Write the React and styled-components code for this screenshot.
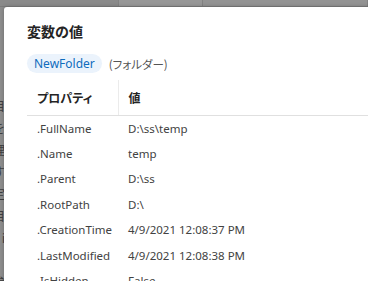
import React from 'react';
import styled, { createGlobalStyle } from 'styled-components';

const GlobalStyle = createGlobalStyle`
  html, body {
    margin: 0;
    padding: 0;
    overflow: hidden;
  }
  body {
    font-family: "Noto Sans", "Noto Sans CJK JP", sans-serif;
  }
`;

// dimmed app behind the dialog
const Page = styled.div`
  position: relative;
  width: 368px;
  height: 281px;
  overflow: hidden;
  background: #8e8e8e;
`;

const TopStrip = styled.div`
  display: flex;
  height: 7px;
  border-bottom: 1px solid #7c7c7c;
  box-sizing: border-box;
`;

const StripSegment = styled.div`
  width: ${(p) => p.$width || 'auto'};
  flex: ${(p) => (p.$width ? 'none' : '1')};
  background: ${(p) => p.$shade};
  border-right: 1px solid #828282;
`;

const SideList = styled.div`
  display: flex;
  flex-direction: column;
  width: 5px;
  overflow: hidden;
  padding-top: 89px;
`;

const SideLine = styled.div`
  display: flex;
  justify-content: flex-end;
  height: 22px;
  line-height: 22px;
  font-size: 12px;
  color: #3f3f3f;
  white-space: nowrap;
`;

// dialog
const Dialog = styled.div`
  position: absolute;
  left: 4px;
  top: 7px;
  right: -20px;
  bottom: -20px;
  background: #ffffff;
  border-radius: 3px;
  box-shadow: 0 0 4px rgba(0, 0, 0, 0.25);
  padding: 14px 0 0 23px;
  box-sizing: border-box;
  display: flex;
  flex-direction: column;
`;

const Title = styled.h2`
  margin: 0;
  font-family: "Noto Sans CJK JP", sans-serif;
  font-size: 14px;
  line-height: 20px;
  font-weight: 600;
  color: #242424;
`;

const TypeRow = styled.div`
  display: flex;
  align-items: center;
  gap: 7px;
  margin-top: 13px;
  height: 19px;
`;

const Pill = styled.span`
  display: inline-flex;
  align-items: center;
  height: 19px;
  padding: 0 7px;
  border-radius: 10px;
  background: #ebf3fc;
  color: #0f6cbd;
  font-size: 12px;
`;

const TypeName = styled.span`
  font-family: "Noto Sans CJK JP", sans-serif;
  font-size: 11.5px;
  color: #555555;
  font-feature-settings: "palt";
`;

const Table = styled.table`
  margin-top: 7px;
  width: 100%;
  border-collapse: collapse;
  table-layout: fixed;
`;

const HeadCell = styled.th`
  height: 35px;
  padding: 0 10px;
  text-align: left;
  font-family: "Noto Sans CJK JP", sans-serif;
  font-size: 12px;
  font-weight: 700;
  color: #242424;
  border-bottom: 1px solid #e0e0e0;
  border-right: ${(p) => (p.$divider ? '1px solid #ebebeb' : 'none')};
  font-feature-settings: "palt";
  box-sizing: border-box;
`;

const Cell = styled.td`
  height: 25.5px;
  padding: 0 10px;
  font-size: 11.5px;
  color: #424242;
  white-space: nowrap;
  box-sizing: border-box;
`;

const rows = [
  ['.FullName', 'D:\\ss\\temp'],
  ['.Name', 'temp'],
  ['.Parent', 'D:\\ss'],
  ['.RootPath', 'D:\\'],
  ['.CreationTime', '4/9/2021 12:08:37 PM'],
  ['.LastModified', '4/9/2021 12:08:38 PM'],
  ['.IsHidden', 'False'],
];

const sideLines = ['項目', '変数を', '処理', 'す', '設定', '目', 'i', '', '参'];

const App = () => {
  return (
    <Page>
      <GlobalStyle />
      <TopStrip>
        <StripSegment $width="118px" $shade="#8a8a8a" />
        <StripSegment $width="83px" $shade="#979797" />
        <StripSegment $shade="#939393" />
      </TopStrip>
      <SideList>
        {sideLines.map((line, i) => (
          <SideLine key={i}>{line}</SideLine>
        ))}
      </SideList>

      <Dialog>
        <Title>変数の値</Title>
        <TypeRow>
          <Pill>NewFolder</Pill>
          <TypeName>(フォルダー)</TypeName>
        </TypeRow>
        <Table>
          <colgroup>
            <col style={{ width: '91px' }} />
            <col />
          </colgroup>
          <thead>
            <tr>
              <HeadCell $divider>プロパティ</HeadCell>
              <HeadCell>値</HeadCell>
            </tr>
          </thead>
          <tbody>
            {rows.map(([name, value]) => (
              <tr key={name}>
                <Cell>{name}</Cell>
                <Cell>{value}</Cell>
              </tr>
            ))}
          </tbody>
        </Table>
      </Dialog>
    </Page>
  );
};

export default App;
